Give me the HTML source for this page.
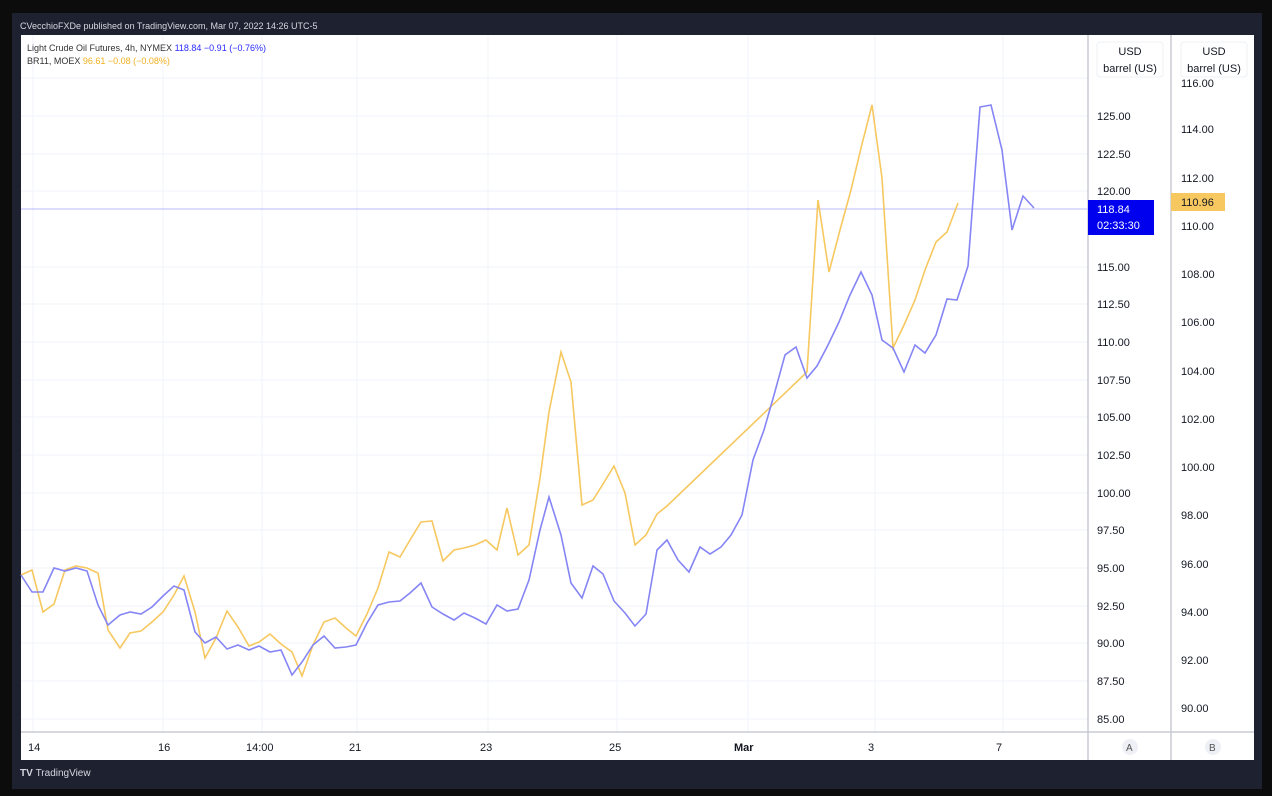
<!DOCTYPE html><html><head><style>
body{margin:0;background:#0c0c0c;width:1272px;height:796px;overflow:hidden;font-family:"Liberation Sans",sans-serif}
.p{position:absolute;left:12px;top:13px;width:1250px;height:776px;background:#1e2130}
.t{position:absolute;color:#d6d8e0;font-size:9px}
svg{position:absolute;left:0;top:0}
</style></head><body>
<div class="p"></div>
<div class="t" style="left:20px;top:21px">CVecchioFXDe published on TradingView.com, Mar 07, 2022 14:26 UTC-5</div>
<div class="t" style="left:20px;top:768px;font-size:10px;font-weight:bold">TV <span style="font-weight:normal">TradingView</span></div>
<svg width="1272" height="796" font-family="Liberation Sans" font-size="11">
<rect x="21" y="35" width="1233" height="725" fill="#fff"/>
<g stroke="#f0f3fa" stroke-width="1">
<line x1="21" x2="1088" y1="116" y2="116"/><line x1="21" x2="1088" y1="154" y2="154"/><line x1="21" x2="1088" y1="191" y2="191"/><line x1="21" x2="1088" y1="267" y2="267"/><line x1="21" x2="1088" y1="304" y2="304"/><line x1="21" x2="1088" y1="342" y2="342"/><line x1="21" x2="1088" y1="380" y2="380"/><line x1="21" x2="1088" y1="417" y2="417"/><line x1="21" x2="1088" y1="455" y2="455"/><line x1="21" x2="1088" y1="493" y2="493"/><line x1="21" x2="1088" y1="530" y2="530"/><line x1="21" x2="1088" y1="568" y2="568"/><line x1="21" x2="1088" y1="606" y2="606"/><line x1="21" x2="1088" y1="643" y2="643"/><line x1="21" x2="1088" y1="681" y2="681"/><line x1="21" x2="1088" y1="719" y2="719"/><line x1="21" x2="1088" y1="78" y2="78"/>
<line y1="35" y2="732" x1="33" x2="33"/><line y1="35" y2="732" x1="163" x2="163"/><line y1="35" y2="732" x1="262" x2="262"/><line y1="35" y2="732" x1="357" x2="357"/><line y1="35" y2="732" x1="488" x2="488"/><line y1="35" y2="732" x1="617" x2="617"/><line y1="35" y2="732" x1="748" x2="748"/><line y1="35" y2="732" x1="875" x2="875"/><line y1="35" y2="732" x1="1003" x2="1003"/>
</g>
<g stroke="#c8cbd3" stroke-width="1.5"><line x1="21" x2="1254" y1="732" y2="732"/><line x1="1088" x2="1088" y1="35" y2="760"/><line x1="1171" x2="1171" y1="35" y2="760"/></g>
<line x1="21" x2="1088" y1="209" y2="209" stroke="#b8b8ff" stroke-width="1"/>
<polyline fill="none" stroke="#f6c85f" stroke-width="1.6" points="21,575 32,570 43,612 54,604 65,570 76,566 87,568 98,573 108,630 120,648 130,633 141,631 152,622 163,612 174,595 184,576 195,612 205,658 216,638 227,611 238,627 249,646 259,642 270,634 281,644 292,652 302,676 313,645 324,622 335,618 346,628 356,636 367,614 378,588 389,552 400,557 410,540 421,522 432,521 443,561 454,550 464,548 475,545 486,540 497,550 507,508 518,555 529,545 540,478 549,412 561,352 571,382 582,505 593,500 603,484 614,466 625,493 635,545 646,535 657,514 667,506 807,372 818,200 829,272 840,230 851,190 861,148 872,105 882,178 893,348 904,325 915,300 925,270 936,242 947,232 958,203"/>
<polyline fill="none" stroke="#8585f5" stroke-width="1.6" points="21,575 32,592 43,592 54,568 65,571 76,568 87,571 98,605 108,625 120,615 130,612 141,614 152,607 163,596 174,586 184,590 195,632 205,643 216,637 227,649 238,645 249,650 259,646 270,652 281,650 292,675 302,662 313,645 324,636 335,648 346,647 356,645 367,623 378,605 389,602 400,601 410,593 421,583 432,607 443,614 454,620 464,613 475,618 486,624 497,605 507,611 518,609 529,580 540,530 549,497 561,535 571,583 582,598 593,566 603,574 614,601 625,613 635,626 646,614 657,550 667,540 678,560 689,572 700,547 710,554 721,547 731,535 742,515 753,460 764,430 774,395 785,355 796,347 807,378 817,366 828,345 839,322 850,295 861,272 872,295 882,340 893,348 904,372 915,345 925,353 936,335 947,299 957,300 968,266 980,107 991,105 1002,150 1012,230 1023,196 1034,208"/>
<g fill="#131722" font-size="11">
<text x="1097" y="120">125.00</text><text x="1097" y="158">122.50</text><text x="1097" y="195">120.00</text><text x="1097" y="271">115.00</text><text x="1097" y="308">112.50</text><text x="1097" y="346">110.00</text><text x="1097" y="384">107.50</text><text x="1097" y="421">105.00</text><text x="1097" y="459">102.50</text><text x="1097" y="497">100.00</text><text x="1097" y="534">97.50</text><text x="1097" y="572">95.00</text><text x="1097" y="610">92.50</text><text x="1097" y="647">90.00</text><text x="1097" y="685">87.50</text><text x="1097" y="723">85.00</text>
<text x="1181" y="87">116.00</text><text x="1181" y="133">114.00</text><text x="1181" y="182">112.00</text><text x="1181" y="230">110.00</text><text x="1181" y="278">108.00</text><text x="1181" y="326">106.00</text><text x="1181" y="375">104.00</text><text x="1181" y="423">102.00</text><text x="1181" y="471">100.00</text><text x="1181" y="519">98.00</text><text x="1181" y="568">96.00</text><text x="1181" y="616">94.00</text><text x="1181" y="664">92.00</text><text x="1181" y="712">90.00</text>
<text x="28" y="751">14</text><text x="158" y="751">16</text><text x="246" y="751">14:00</text><text x="349" y="751">21</text><text x="480" y="751">23</text><text x="609" y="751">25</text><text x="734" y="751" font-weight="bold">Mar</text><text x="868" y="751">3</text><text x="996" y="751">7</text>
</g>
<rect x="1097" y="42" width="66" height="35" rx="3" fill="#fff" stroke="#eef0f4"/>
<rect x="1181" y="42" width="66" height="35" rx="3" fill="#fff" stroke="#eef0f4"/>
<g fill="#131722" text-anchor="middle" font-size="11"><text x="1130" y="55">USD</text><text x="1130" y="72">barrel (US)</text><text x="1214" y="55">USD</text><text x="1214" y="72">barrel (US)</text></g>
<rect x="1088" y="200" width="66" height="35" fill="#0000ee"/>
<text x="1097" y="213" fill="#fff" font-size="11">118.84</text><text x="1097" y="229" fill="#fff" font-size="11">02:33:30</text>
<rect x="1171" y="193" width="54" height="18" fill="#f6c85f"/>
<text x="1181" y="206" fill="#131722" font-size="11">110.96</text>
<circle cx="1130" cy="747" r="8" fill="#eef0f5"/><text x="1126" y="751" font-size="10" fill="#555">A</text>
<circle cx="1213" cy="747" r="8" fill="#eef0f5"/><text x="1209" y="751" font-size="10" fill="#555">B</text>
<text x="27" y="51" font-size="9" fill="#333">Light Crude Oil Futures, 4h, NYMEX <tspan fill="#2a2aff">118.84 −0.91 (−0.76%)</tspan></text>
<text x="27" y="64" font-size="9" fill="#333">BR11, MOEX <tspan fill="#f0b020">96.61 −0.08 (−0.08%)</tspan></text>
</svg>
</body></html>
